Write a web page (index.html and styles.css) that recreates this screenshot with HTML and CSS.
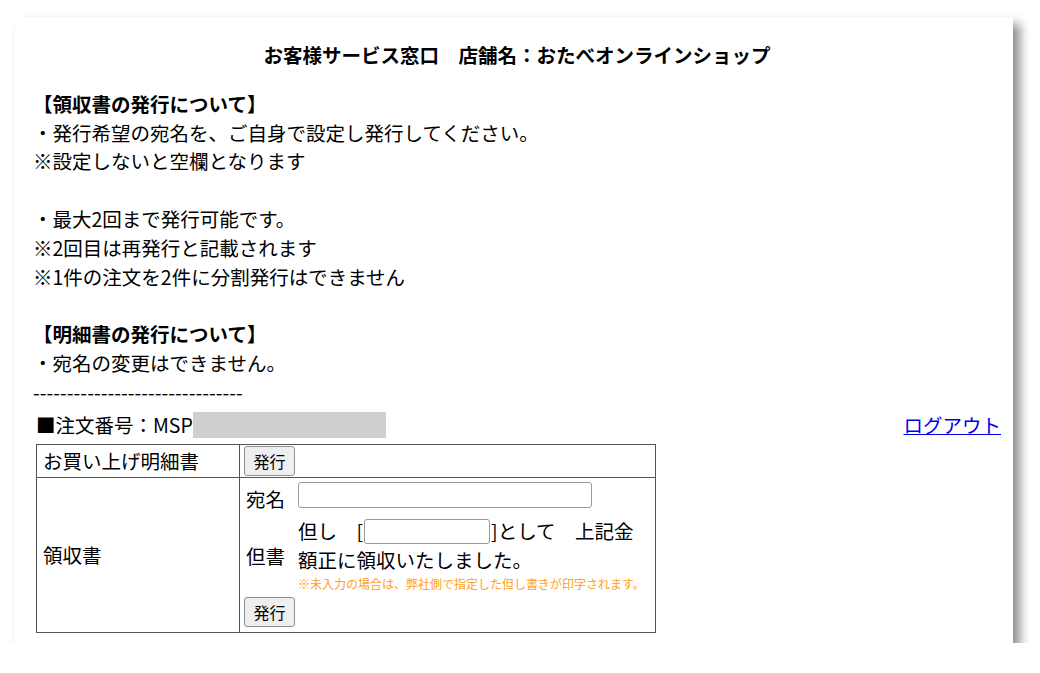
FILE: index.html
```html
<!DOCTYPE html>
<html lang="ja">
<head>
    <meta charset="UTF-8">
    <title>領収書発行 | おたべオンラインショップ</title>
    <link rel="stylesheet" href="styles.css">
</head>
<body>
    <div class="sheet">
        <h1 class="title">お客様サービス窓口　店舗名：おたべオンラインショップ</h1>
        <div class="notice">
            <p class="notice-head">【領収書の発行について】</p>
            <p>・発行希望の宛名を、ご自身で設定し発行してください。</p>
            <p>※設定しないと空欄となります</p>
            <p>&nbsp;</p>
            <p>・最大2回まで発行可能です。</p>
            <p>※2回目は再発行と記載されます</p>
            <p>※1件の注文を2件に分割発行はできません</p>
            <p>&nbsp;</p>
            <p class="notice-head">【明細書の発行について】</p>
            <p>・宛名の変更はできません。</p>
            <p>-------------------------------</p>
        </div>
        <div class="order-row">
            <div class="order-no">■注文番号：MSP<span class="masked"></span></div>
            <a href="#" class="logout">ログアウト</a>
        </div>
        <table class="doc-table">
            <tr>
                <td class="doc-name">お買い上げ明細書</td>
                <td class="doc-action"><button class="issue-btn">発行</button></td>
            </tr>
            <tr>
                <td class="doc-name">領収書</td>
                <td class="doc-action receipt-cell">
                    <table class="receipt-form">
                        <tr>
                            <td class="field-label">宛名</td>
                            <td class="field-body"><input type="text" class="input-name"></td>
                        </tr>
                        <tr>
                            <td class="field-label">但書</td>
                            <td class="field-body">
                                <div class="proviso">但し　[<input type="text" class="input-proviso">]として　上記金額正に領収いたしました。</div>
                                <div class="proviso-note">※未入力の場合は、弊社側で指定した但し書きが印字されます。</div>
                            </td>
                        </tr>
                    </table>
                    <button class="issue-btn">発行</button>
                </td>
            </tr>
        </table>
    </div>
</body>
</html>
```

FILE: styles.css
```css
html, body {
    margin: 0;
    padding: 0;
    background-color: #ffffff;
}
body {
    font-family: "Noto Sans CJK JP", "Noto Sans", sans-serif;
    font-size: 19.5px;
    line-height: 28.8px;
    color: #000000;
    padding: 17px 0 0 15px;
}
.sheet {
    width: 998px;
    height: 626px;
    box-sizing: border-box;
    padding: 24px 12px 0 18px;
    background-color: #ffffff;
    box-shadow: 7px 7px 10px rgba(0, 0, 0, 0.45);
}
.title {
    margin: 0 0 20px;
    font-size: 19.5px;
    line-height: 28.8px;
    font-weight: bold;
    text-align: center;
}
.notice p {
    margin: 0;
    white-space: nowrap;
}
.notice .notice-head {
    font-weight: bold;
}
.order-row {
    display: flex;
    justify-content: space-between;
    align-items: center;
    padding: 4px 0 5px 3px;
}
.order-no {
    display: flex;
    align-items: center;
}
.masked {
    display: inline-block;
    width: 193px;
    height: 26px;
    background-color: #d0cfd0;
}
.logout {
    color: #0000ee;
    text-decoration: underline;
}
.doc-table {
    margin-left: 3px;
    width: 620px;
    border-collapse: collapse;
    border: 1px solid #555555;
}
.doc-table > tbody > tr > td {
    border: 1px solid #555555;
    padding: 1px 4px;
}
.doc-table .doc-name {
    width: 192px;
    padding-left: 6px;
    vertical-align: middle;
}
.doc-action {
    vertical-align: top;
}
.doc-table > tbody > tr > td.receipt-cell {
    padding-bottom: 5px;
}
.issue-btn {
    display: block;
    width: 51px;
    height: 30px;
    padding: 0;
    font-family: inherit;
    font-size: 16px;
    color: #000000;
    background-color: #efefef;
    border: 1px solid #8f8f8f;
    border-radius: 3px;
}
.receipt-form {
    border-collapse: collapse;
    margin: 2px 0 2px 2px;
}
.receipt-form td {
    padding: 0;
}
.field-label {
    width: 38px;
    padding-right: 13px !important;
    vertical-align: middle;
    white-space: nowrap;
}
.field-body {
    width: 345px;
    padding-bottom: 3px !important;
}
.input-name {
    display: block;
    box-sizing: border-box;
    width: 294px;
    height: 26px;
    margin: 1px 0 6px;
    border: 1px solid #999999;
    border-radius: 3px;
}
.proviso {
    line-height: 28.8px;
}
.input-proviso {
    box-sizing: border-box;
    width: 126px;
    height: 25px;
    margin: 2px 1px 0;
    vertical-align: top;
    border: 1px solid #999999;
    border-radius: 3px;
}
.proviso-note {
    font-size: 12px;
    line-height: 17px;
    color: #ffa020;
    white-space: nowrap;
}
```
